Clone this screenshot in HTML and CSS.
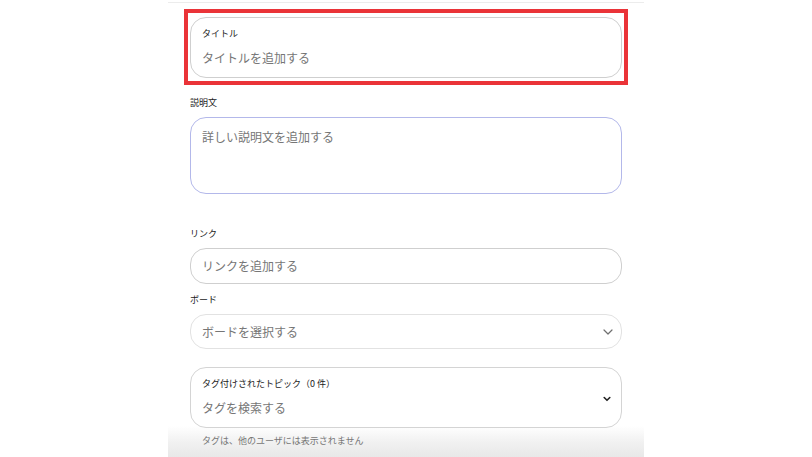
FILE: index.html
```html
<!DOCTYPE html>
<html lang="ja">
<head>
<meta charset="utf-8">
<title>ピンを作成</title>
<link rel="stylesheet" href="styles.css">
</head>
<body>
<main class="card">
  <div class="top-rule"></div>
  <div class="form">
    <div class="highlight">
      <div class="field-box tall">
        <span class="inner-label">タイトル</span>
        <span class="placeholder">タイトルを追加する</span>
      </div>
    </div>

    <div class="group group-desc">
      <span class="label">説明文</span>
      <div class="field-box area">
        <span class="placeholder">詳しい説明文を追加する</span>
      </div>
    </div>

    <div class="group group-link">
      <span class="label">リンク</span>
      <div class="field-box single">
        <span class="placeholder">リンクを追加する</span>
      </div>
    </div>

    <div class="group group-board">
      <span class="label">ボード</span>
      <div class="field-box single board">
        <span class="placeholder">ボードを選択する</span>
        <svg class="chev" width="10" height="6" viewBox="0 0 10 6"><path d="M1 1 L5 5 L9 1" fill="none" stroke="#6f6f6f" stroke-width="1.2" stroke-linecap="round" stroke-linejoin="round"/></svg>
      </div>
    </div>

    <div class="group group-tags">
      <div class="field-box tall tags">
        <div class="tags-text">
          <span class="inner-label">タグ付けされたトピック（0 件）</span>
          <span class="placeholder">タグを検索する</span>
        </div>
        <svg class="chev chev-dark" width="8" height="6" viewBox="0 0 8 6"><path d="M1.2 1.5 L4 4.3 L6.8 1.5" fill="none" stroke="#222" stroke-width="1.6" stroke-linecap="round" stroke-linejoin="round"/></svg>
      </div>
      <span class="helper">タグは、他のユーザには表示されません</span>
    </div>
  </div>
</main>
</body>
</html>
```

FILE: styles.css
```css
* { box-sizing: border-box; }

html, body {
  margin: 0;
  padding: 0;
  background: #ffffff;
}

body {
  font-family: "Noto Sans CJK JP", "Noto Sans", sans-serif;
  color: #222;
  height: 457px;
  overflow: hidden;
}

.card {
  width: 476px;
  margin: 0 auto;
  height: 457px;
  background: linear-gradient(to bottom, #ffffff 0px, #ffffff 426px, #f1f1f1 442px, #e8e8e8 457px);
  padding-top: 2px;
}

.top-rule {
  height: 1px;
  background: #ececec;
}

.form {
  display: flex;
  flex-direction: column;
  padding: 6px 16px 0;
}

.highlight {
  border: 4px solid #ea3338;
  padding: 4px 2px 3px;
}

.field-box {
  border: 1px solid #cfcfcf;
  border-radius: 16px;
  background: #fff;
  display: flex;
}

.tall {
  height: 61px;
  flex-direction: column;
  padding: 9px 11px 0;
}

.inner-label {
  font-size: 9px;
  line-height: 14px;
  font-weight: 400;
  color: #1a1a1a;
}

.placeholder {
  font-size: 12px;
  line-height: 18px;
  color: #767676;
}

.tall .placeholder {
  margin-top: 8px;
}

.group {
  display: flex;
  flex-direction: column;
  padding: 0 6px;
}

.label {
  font-size: 9px;
  line-height: 14px;
  font-weight: 400;
  color: #1a1a1a;
  margin-bottom: 7px;
}

.group-desc { margin-top: 11px; }
.group-link { margin-top: 33px; }
.group-board { margin-top: 9px; }
.group-tags { margin-top: 18px; }

.area {
  height: 77px;
  border-color: #b3b8ea;
  padding: 10px 11px 0;
  align-items: flex-start;
}

.single {
  height: 36px;
  align-items: center;
  padding: 0 11px;
}

.board {
  height: 35px;
  justify-content: space-between;
  border-color: #e2e2e2;
  padding-right: 8px;
}

.board .chev {
  margin-top: 1px;
}

.tags {
  flex-direction: row;
  justify-content: space-between;
  align-items: flex-start;
  border-color: #d4d4d4;
  padding-right: 10px;
}

.tags-text {
  display: flex;
  flex-direction: column;
}

.chev-dark {
  margin-top: 19px;
}

.helper {
  font-size: 9px;
  line-height: 14px;
  color: #767676;
  margin-top: 6px;
  padding-left: 12px;
}
```
